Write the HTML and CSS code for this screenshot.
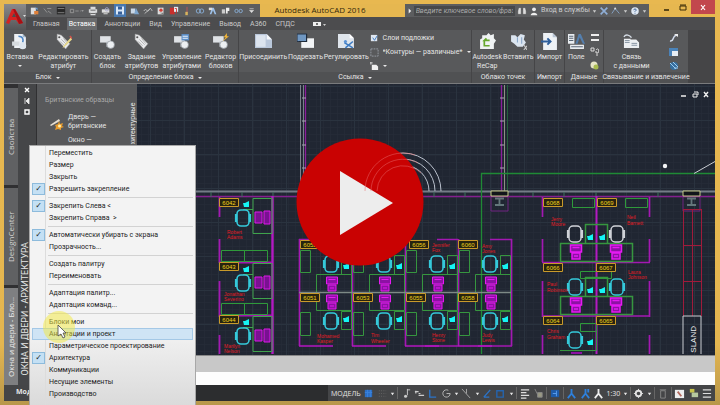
FILE: index.html
```html
<!DOCTYPE html>
<html lang="ru">
<head>
<meta charset="utf-8">
<title>Autodesk AutoCAD 2016</title>
<link rel="stylesheet" href="styles.css">
</head>
<body>
<svg class="defs" aria-hidden="true">
  <defs>
    <g id="page"><path d="M3 1h8l3 3v10H3z" fill="#eef1f5"/><path d="M11 1v3h3z" fill="#9fb6cc"/></g>
    <g id="block"><path d="M1 3h10v6H1z" fill="#dfe2e6"/><path d="M7 8h6v5H7z" fill="#c2c8cf"/><circle cx="11" cy="11" r="3.5" fill="#eceff2" stroke="#8d949c" stroke-width=".6"/></g>
    <g id="tag"><path d="M2 1l4 1 8 8-4 5-8-9z" fill="#e9eaec" stroke="#9b9b9b" stroke-width=".5"/><circle cx="4" cy="4" r="1" fill="#555"/><path d="M6 6l5 5M8 5l4 5M5 8l4 4" stroke="#999" stroke-width=".6"/></g>
    <path id="caret" d="M0 0h4L2 3z" fill="#e8e8e8"/>
  </defs>
</svg>
<div class="app">
  <header class="head">
    <button class="logo" aria-label="Меню приложения">
      <svg viewBox="0 0 22 24"><path d="M8 4h3l8 14-4 1-3-4H7l-2 4-3-1z" fill="#d42323"/><path d="M9 4h2l8 14-4 1z" fill="#a90f14"/><path d="M8 12l2-4 2 4z" fill="#4b4b4b"/><path d="M19 10h3l-1.500 2z" fill="#ddd"/></svg>
    </button>
    <div class="headrows">
      <div class="titlebar">
        <div class="quick">
          <svg viewBox="0 0 12 12"><path d="M1 2h6v8H1z" fill="#ddd"/><path d="M5 6h5v4H5z" fill="#e0813a"/><path d="M6 2h3v3z" fill="#6fa2d8"/></svg>
          <svg viewBox="0 0 12 12"><path d="M1 3l4 5M5 3h5M6 6l4 3" stroke="#999" fill="none"/></svg>
          <svg viewBox="0 0 12 12"><path d="M1 1h10v9H1z" fill="#292929"/><path d="M2 3h8M2 8h8" stroke="#888"/></svg>
          <svg class="wide" viewBox="0 0 18 12"><path d="M1 4h4v4H1zM7 6h4M13 6h1" stroke="#9a9a9a" fill="none"/><path d="M14 5h3l-1 2z" fill="#aaa"/></svg>
          <svg viewBox="0 0 12 12"><path d="M3 1h6v3H3zM1 4h10v4H1zM3 8h6v3H3z" fill="#d9dadc"/><path d="M3 5h6M3 9h6" stroke="#555"/></svg>
          <svg viewBox="0 0 12 12"><path d="M1 4h9v4H1z" fill="#ddd"/><circle cx="7" cy="4" r="2" fill="none" stroke="#aac"/><path d="M3 8h5v2H3z" fill="#bbb"/></svg>
          <svg class="hot" viewBox="0 0 12 12"><path d="M2 2h8v8H2z" fill="#d9e7f8"/><path d="M4 2h4v3H4zM4 7h4v3H4z" fill="#355f9a"/></svg>
          <svg viewBox="0 0 12 12"><path d="M1 3h5v6H1z" fill="#c9d7e6"/><path d="M5 10l2-8 4 8z" fill="#7ea6cf"/></svg>
          <svg viewBox="0 0 12 12"><path d="M1 6c3-5 4 3 6-1s3-1 4 1M2 9l7-6" stroke="#ccc" fill="none"/></svg>
          <svg viewBox="0 0 12 12"><path d="M2 2h7v8H2z" fill="#ddd"/><circle cx="6" cy="5" r="2" fill="#cf4036"/><path d="M4 8h5v2z" fill="#777"/></svg>
          <svg viewBox="0 0 12 12"><path d="M1 2h6v8H1z" fill="#c9302c"/><path d="M6 1h5v6H6z" fill="#e4eaf0"/><path d="M7 3h2v6" stroke="#c9302c" fill="none"/></svg>
          <svg viewBox="0 0 12 12"><path d="M6 1v7" stroke="#c55"/><path d="M4 7h3v4H4z" fill="#d9b45e"/></svg>
          <svg viewBox="0 0 12 12"><circle cx="4" cy="6" r="2.500" fill="none" stroke="#8ab2dd"/><circle cx="8" cy="6" r="2.500" fill="none" stroke="#8ab2dd"/></svg>
          <svg viewBox="0 0 12 12"><path d="M2 10l3-8h2l3 8H8L6 5l-2 5z" fill="#9dc1ea"/><path d="M1 2h4v3H1z" fill="#ddd"/></svg>
          <svg viewBox="0 0 12 12"><path d="M1 4h4v5H1z" fill="#ccc"/><path d="M6 2h4v4H8v3H6z" fill="#eee"/></svg>
          <svg viewBox="0 0 12 12"><circle cx="3" cy="6" r="2" fill="none" stroke="#8ab2dd"/><circle cx="8" cy="6" r="2" fill="none" stroke="#8ab2dd"/></svg>
          <svg viewBox="0 0 12 12"><path d="M3 3h5M3 5h5L5.500 8z" fill="#ddd" stroke="#ddd" stroke-width=".6"/></svg>
        </div>
        <h1 class="title">Autodesk AutoCAD 2016</h1>
        <div class="info">
          <svg class="mini" viewBox="0 0 6 12"><path d="M2 3l3 3-3 3z" fill="#eee"/></svg>
          <input class="search" type="text" aria-label="Поиск" placeholder="Введите ключевое слово/фразу">
          <svg viewBox="0 0 12 12"><path d="M2 2h3v8H1V6zM7 2h3l1 4v4H7zM5 4h2" fill="#ddd" stroke="#444" stroke-width=".5"/></svg>
          <svg viewBox="0 0 12 12"><circle cx="6" cy="4" r="2.300" fill="#eee"/><path d="M2 11c0-4 8-4 8 0z" fill="#eee"/></svg>
          <button class="login">Вход в службы</button>
          <svg class="mini" viewBox="0 0 6 12"><path d="M1 5h4L3 8z" fill="#ccc"/></svg>
          <svg viewBox="0 0 12 12"><path d="M2 2l8 8M10 2l-8 8" stroke="#8faed6" stroke-width="2"/></svg>
          <svg viewBox="0 0 12 12"><path d="M1 9l4-6 5 6" stroke="#89a9cf" fill="none"/><circle cx="5" cy="3" r="1.200" fill="#ddd"/></svg>
          <svg class="mini" viewBox="0 0 6 12"><path d="M1 5h4L3 8z" fill="#ccc"/></svg>
          <svg class="help" viewBox="0 0 12 12"><circle cx="6" cy="6" r="4.500" fill="#dfe8f3"/><path d="M4.500 5c0-2 3-2 3 0L6 6.500V7M6 8.200v1" stroke="#274c83" fill="none"/></svg>
          <svg class="mini" viewBox="0 0 6 12"><path d="M1 5h4L3 8z" fill="#ccc"/></svg>
        </div>
        <div class="winbtns">
          <button aria-label="Свернуть"><svg viewBox="0 0 10 10"><path d="M2 8h5" stroke="#3b2c09" stroke-width="1.600"/></svg></button>
          <button aria-label="Развернуть"><svg viewBox="0 0 10 10"><path d="M2 4h6v4H2z" stroke="#3b2c09" fill="none"/><path d="M2 3h6" stroke="#3b2c09"/></svg></button>
          <button class="close" aria-label="Закрыть"><svg viewBox="0 0 10 10"><path d="M3 3l4 5M7 3L3 8" stroke="#fff" stroke-width="1.200"/></svg></button>
        </div>
      </div>
      <nav class="tabs">
        <a href="#">Главная</a><a href="#" class="on">Вставка</a><a href="#">Аннотации</a><a href="#">Вид</a><a href="#">Управление</a><a href="#">Вывод</a><a href="#">A360</a><a href="#">СПДС</a>
        <svg viewBox="0 0 14 8"><path d="M1 2h8v4H1z" fill="#eee"/><circle cx="5" cy="4" r="1" fill="#444"/><path d="M11 4h3l-1.500 2z" fill="#ccc"/></svg>
      </nav>
    </div>
  </header>

  <section class="ribbon">
    <div class="panel p-block">
      <div class="tools">
        <button><svg viewBox="0 0 16 16"><use href="#page"/><path d="M1 8h7v4H1z" fill="#d6dade"/><path d="M7 3c4 0 5 3 4 6" stroke="#4d86c6" stroke-width="1.500" fill="none"/><circle cx="11" cy="12" r="3.300" fill="#dfe7f0"/></svg><span>Вставка</span><i></i></button>
        <button><svg viewBox="0 0 16 16"><use href="#tag"/><path d="M15 4l-7 8-1 2 2-1 7-7z" fill="#e9d98a"/><path d="M14 3l2 2" stroke="#d2544c" stroke-width="1.500"/></svg><span>Редактировать<br>атрибут</span></button>
      </div>
      <div class="caption">Блок <i></i></div>
    </div>
    <div class="panel p-def">
      <div class="tools">
        <button><svg viewBox="0 0 16 16"><use href="#block"/></svg><span>Создать<br>блок</span></button>
        <button><svg viewBox="0 0 16 16"><use href="#tag"/></svg><span>Задание<br>атрибутов</span></button>
        <button><svg viewBox="0 0 16 16"><use href="#block"/><path d="M8 1h7v6H8z" fill="#5d8fc8"/><path d="M9 3h5M9 5h5" stroke="#e8f1fb"/></svg><span>Управление<br>атрибутами</span></button>
        <button><svg viewBox="0 0 16 16"><use href="#block"/><path d="M14 0l-3 4h2l-3 4 6-5h-2z" fill="#f0b436"/></svg><span>Редактор<br>блоков</span></button>
      </div>
      <div class="caption">Определение блока <i></i></div>
    </div>
    <div class="panel p-link">
      <div class="tools">
        <button><svg viewBox="0 0 16 16"><path d="M0 1h11l5 5v8H0z" fill="#b9c7da"/><path d="M1 2h9v11H1z" fill="#dce4ee"/><path d="M11 1v5h5z" fill="#f6f8fb"/></svg><span>Присоединить</span></button>
        <button><svg viewBox="0 0 16 16"><path d="M4 5h12v9H4z" fill="#f2f4f6"/><path d="M0 1h9v7H0z" fill="#6f97c2" stroke="#26364a"/><path d="M9 1v7H2" stroke="#1f2b3a" fill="none"/></svg><span>Подрезать</span></button>
        <button><svg viewBox="0 0 16 16"><path d="M0 1h11l4 4v9H0z" fill="#dfe5ec"/><path d="M11 1v4h4z" fill="#fff"/><path d="M6 9l8 5M14 8l-7 6" stroke="#3d7bc2" stroke-width="1.500"/><circle cx="7" cy="8" r="1.500" fill="#5b92d4"/></svg><span>Регулировать</span></button>
        <div class="stack">
          <button><svg viewBox="0 0 10 10"><path d="M1 1h7v7H1z" fill="#dfe7f1"/><path d="M3 4l2 3 3-5" stroke="#3a78c2" fill="none"/></svg>Слои подложки</button>
          <label><svg viewBox="0 0 10 10"><path d="M1 1h8v8H1z" fill="none" stroke="#9aa0a8" stroke-dasharray="2 1"/></svg><select><option>*Контуры — различные*</option></select><i></i></label>
          <button><svg viewBox="0 0 10 10"><path d="M2 3h5l2 2v4H2z" fill="#f0f0f0"/><path d="M0 1h3M1 0v3" stroke="#ddd"/></svg><i></i></button>
        </div>
      </div>
      <div class="caption">Ссылка <i></i></div>
    </div>
    <div class="panel p-cloud">
      <div class="tools">
        <button><svg viewBox="0 0 16 16"><path d="M3 2h4l2-2 2 2 3-1v4l2 2-2 3v5H1V6l2-1z" fill="#f0f3f4"/><path d="M10 7H5l2-2M5 7v5h5" stroke="#67a82f" stroke-width="1.600" fill="none"/></svg><span>Autodesk<br>ReCap</span></button>
        <button><svg viewBox="0 0 16 16"><path d="M1 2h4l2 2 3-3 4 1-1 4 2 3-3 4H7L4 10 1 8z" fill="#dbe5f0"/><path d="M7 4v5M11 4v6" stroke="#89a7c9"/><path d="M13 11l3 5M16 12l-3 4" stroke="#ccc"/></svg><span>Вставить</span></button>
      </div>
      <div class="caption">Облако точек</div>
    </div>
    <div class="panel p-import">
      <div class="tools"><button><svg viewBox="0 0 16 16"><path d="M2 0h9l4 4v12H2z" fill="#eef2f6"/><path d="M11 0v4h4z" fill="#b8c5d4"/><path d="M0 8h9M6 5l3 3-3 3" stroke="#2e5f9c" stroke-width="1.800" fill="none"/></svg><span>Импорт</span></button></div>
      <div class="caption">Импорт</div>
    </div>
    <div class="panel p-data">
      <div class="tools">
        <button><svg viewBox="0 0 16 16"><path d="M0 1h6v9H0zM2 11h13v4H2z" fill="#e9edf1"/><path d="M1 3h4M1 5h4M1 7h4M3 13h11" stroke="#596675"/><path d="M7 10l3-9h2l4 9h-2l-3-6-2 6z" fill="#547fae"/></svg><span>Поле</span></button>
        <div class="icons">
          <svg viewBox="0 0 10 10"><path d="M1 2h8M1 7h8" stroke="#eee" stroke-width="2"/></svg>
          <svg viewBox="0 0 10 10"><path d="M1 1h3v3H1zM5 5h2v4M6 3c3-3 3 1 2 3" stroke="#ddd" fill="none"/></svg>
          <svg viewBox="0 0 10 10"><circle cx="4" cy="4" r="3.500" fill="#e7e6c6"/><circle cx="6" cy="6" r="2.500" fill="#a8bb4f"/></svg>
        </div>
      </div>
      <div class="caption">Данные</div>
    </div>
    <div class="panel p-conn">
      <div class="tools">
        <button><svg viewBox="0 0 18 16"><path d="M1 5h7v10H1zM7 6h7l3 3v6H7z" fill="#eceff2"/><path d="M2 7h5M2 9h5M9 10h6M9 12h6" stroke="#82909f"/><path d="M1 3c2-3 6-2 8 1" stroke="#d6dde6" stroke-width="1.500" fill="none"/></svg><span>Связь<br>с данными</span></button>
        <div class="icons">
          <svg viewBox="0 0 10 10"><path d="M1 8c5 1 1-6 8-6" stroke="#d3dced" stroke-width="1.500" fill="none"/><path d="M5 1h4v3z" fill="#eee"/></svg>
          <svg viewBox="0 0 10 10"><path d="M0 1h9v8H0z" fill="#4b83b9"/><path d="M3 4h6v5H3z" fill="#e8eef4"/></svg>
          <svg viewBox="0 0 10 10"><circle cx="5" cy="5" r="4" fill="#376f9f"/><path d="M1 2l6 6M4 1l5 5M5 7h4" stroke="#9ecbef"/></svg>
        </div>
      </div>
      <div class="caption">Связывание и извлечение</div>
    </div>
    <div class="rest"></div>
  </section>

  <main class="work">
    <aside class="sidetabs">
      <button>Свойства</button><button>DesignCenter</button><button class="lit">Окна и двери - Бло...</button>
    </aside>
    <div class="strip">
      <svg viewBox="0 0 8 30"><path d="M2 2l4 4M6 2L2 6" stroke="#fff" stroke-width="1.400"/><path d="M2 12v6M3 15l3-3v6z" fill="#eee" stroke="#eee" stroke-width=".8"/><path d="M2 24h4v4H2z" fill="none" stroke="#fff" stroke-width="1.400"/></svg>
      <span>ОКНА И ДВЕРИ - АРХИТЕКТУРА</span>
    </div>
    <div class="right">
      <div class="canvas">
        <section class="palette">
          <div class="samples">
            <h2>Британские образцы</h2>
            <button><svg viewBox="0 0 14 14"><path d="M0 8l9-6 1 2-9 5z" fill="#e6dfd2"/><path d="M9 4l1 3 3-1-1 3 2 1-3 1v2l-3-1-3 1 1-3-1-2 3-1z" fill="#e79b2d"/><circle cx="9.500" cy="9" r="1.500" fill="#fff2b0"/></svg><span>Дверь —<br>британские</span></button>
            <button><svg viewBox="0 0 14 14"></svg><span>Окно —</span></button>
          </div>
          <span class="ptab">Архитектурные</span>
        </section>
        <svg class="drawing" viewBox="137 84 578 271" preserveAspectRatio="xMinYMin slice" role="img" aria-label="Чертёж">
          <defs>
            <pattern id="minor" width="7" height="7" patternUnits="userSpaceOnUse" x="1" y="1"><path d="M.5 0v7M0 .5h7" stroke="#252c38" stroke-width=".7"/></pattern>
            <pattern id="major" width="34" height="34" patternUnits="userSpaceOnUse" x="14" y="18"><path d="M.5 0v34M0 .5h34" stroke="#2a333f"/></pattern>
            <g id="chair" fill="none"><rect x="-6" y="-8" width="12" height="16" rx="4"/><path d="M-7-4v8M7-4v8" stroke-width="2.200"/></g>
            <path id="phone" d="M0 2h2l4-2v6H1z" fill="#15f4f4"/>
            <g id="pc"><path d="M-5.500-7h11v7h-11zM-4 1h8v6h-8z" fill="#8d11a4" stroke="#e61af2"/><path d="M-3.500-4.500h7M-2 4h4" stroke="#e61af2"/></g>
            <g id="office">
              <path d="M253 .5h19v35h-19zM253 11.500h-10" fill="none" stroke="#3fa34c"/>
              <use href="#chair" x="243" y="20" stroke="#35c9da" stroke-width="1.600"/>
              <use href="#phone" x="243" y="3"/>
              <path d="M255 14h7v11h-7zM264 13h6v13h-6z" fill="#791191" stroke="#dd18e8"/>
            </g>
            <g id="cell">
              <path d="M1.500 250.500h10v22h-10zM1.500 312.500h10v23h-10zM42.500 255.500h10v19h-10zM42.500 311.500h10v18h-10zM17.500 274.500h35v36h-35z" fill="none" stroke="#36963f"/>
              <path d="M0 292.500h53" stroke="#7d8a86" stroke-width="1.300"/>
              <use href="#chair" x="32" y="264" stroke="#35c9da" stroke-width="1.600"/>
              <use href="#chair" x="32" y="321" stroke="#35c9da" stroke-width="1.600"/>
              <use href="#phone" x="44" y="263"/><use href="#phone" x="44" y="316"/>
              <use href="#pc" x="33" y="284"/><use href="#pc" x="33" y="302"/>
              <path d="M0 346h34" stroke="#b416c2" stroke-width="1.600"/>
            </g>
            <g id="pair">
              <path d="M560.500 18.500h72v18h-72zM585.500-.500h22v19h-22z" fill="none" stroke="#36963f"/>
              <use href="#chair" x="575" y="9"/><use href="#chair" x="617" y="9"/>
              <g stroke="none"><use href="#phone" x="587" y="9"/><use href="#phone" x="599" y="9"/></g>
              <use href="#pc" x="576" y="27"/><use href="#pc" x="616" y="27"/>
            </g>
            <g id="column"><path d="M0 191h17v5H0z" fill="#11151a" stroke="#c5c98a"/><path d="M4 198.500h9M4 205h9M8.500 198v7" stroke="#64777b" stroke-width="1.800"/><path d="M0 197v14h17v-14" fill="none" stroke="#6e2380"/></g>
            <path id="plate" d="M.5.500h19v8H.5z" fill="#27230f" stroke="#c99a2b"/>
          </defs>
          <rect x="137" y="84" width="2000" height="1200" fill="#202632"/>
          <rect x="137" y="84" width="2000" height="1200" fill="url(#minor)"/>
          <rect x="137" y="84" width="2000" height="1200" fill="url(#major)"/>
          <path d="M300.500 85v106M303.500 85v106" stroke="#7b808c"/>
          <path d="M305.500 85v106M501.500 85v106" stroke="#8c1d9c" stroke-width="1.300"/>
          <path d="M302 98h4M302 121h4M302 145h4M302 168h4M500 98h5M500 121h5M500 145h5M500 168h5" stroke="#a4a4b0"/>
          <path d="M504.500 85v106" stroke="#8f9086"/><path d="M507.500 85v106" stroke="#245f3b"/>
          <path d="M196 191.500h519" stroke="#747c87" stroke-width="2"/><path d="M196 196.500h519" stroke="#85208f" stroke-width="1.500"/>
          <path d="M211 192v5M242 192v5M273 192v5M434 192v5M465 192v5M533 192v5M564 192v5M596 192v5M658 192v5" stroke="#3f6f5c"/>
          <g fill="none" stroke="#b9c0cc"><path d="M365 191a38 38 0 0 1 76 0M371 191a32 32 0 0 1 64 0M377 191a26 26 0 0 1 52 0"/></g>
          <path d="M481.500 354V173.500H715" fill="none" stroke="#1f8a35" stroke-width="1.300"/>
          <path d="M694 173.500l21-12" stroke="#c8ccd2"/><circle cx="665" cy="166" r="2.200" fill="#f3f4f6"/>
          <g stroke="#f0f0f0" fill="none" stroke-width="1.400"><path d="M681 96h5M704 92l4 5M708 92l-4 5"/><path d="M693 94h4v3h-4zM694 92h4v3" stroke-width="1"/></g>
          <use href="#column" x="491"/><use href="#column" x="683"/>
          <path d="M683.500 209v107M692.500 209v107M701.500 209v107M683 209.500h18M683 245.500h18M683 281.500h18" stroke="#a01b3b"/>
          <path d="M683 354v-38h18v38" fill="none" stroke="#c9ccd1"/>
          <text class="island" transform="translate(696 326) rotate(-90)" text-anchor="end">SLAND</text>

          <path d="M272.500 196v158" stroke="#b31ac2" stroke-width="2.400"/>
          <path d="M219.500 197v20M219.500 239v24M219.500 281v36M219.500 335v19M219 262.500h53M219 315.500h53" stroke="#a318b2" stroke-width="1.800"/>
          <path d="M221.500 250.500h23v11h-23zM244.500 250.500h23v11h-23zM221.500 303.500h23v11h-23zM244.500 303.500h23v11h-23z" fill="none" stroke="#2f9a3b"/>
          <use href="#office" y="198"/><use href="#office" y="263"/><use href="#office" y="316"/>

          <path d="M299.500 239v107M352.500 239v107M405.500 239v107M458.500 239v107M511.500 239v107M299 239.500h34M437 239.500h21M490 239.500h22M478 346h34M425 346h33" stroke="#a318b2" stroke-width="1.700"/>
          <use href="#cell" x="299"/><use href="#cell" x="352"/><use href="#cell" x="405"/><use href="#cell" x="458"/>

          <path d="M596.500 196v158" stroke="#b31ac2" stroke-width="2"/>
          <path d="M542.500 197v20M542.500 239v23M542.500 281v36M542.500 335v19M649.500 197v20M649.500 239v23M649.500 281v36M649.500 335v19M542 262.500h108M542 316h108" stroke="#a318b2" stroke-width="1.700"/>
          <path d="M572.500 198.500h22v9h-22zM625.500 198.500h22v9h-22zM580.500 271.500h31v7h-31zM580.500 323.500h16v8h-16z" fill="none" stroke="#2f9a3b"/>
          <use href="#pair" y="225" stroke="#cfd2d8" stroke-width="1.500"/><use href="#pair" y="278" stroke="#35c9da" stroke-width="1.500"/>
          <path d="M585.500 331.500h11v19M560 350.500h36" fill="none" stroke="#36963f"/>
          <use href="#chair" x="575" y="340" stroke="#35c9da" stroke-width="1.500"/><use href="#phone" x="587" y="339"/><path d="M571 352h11v2h-11z" fill="#8d11a4"/>

          <use href="#plate" x="219" y="198"/><use href="#plate" x="219" y="262"/><use href="#plate" x="219" y="315"/>
          <use href="#plate" x="300" y="240"/><use href="#plate" x="353" y="240"/><use href="#plate" x="409" y="240"/><use href="#plate" x="458" y="240"/>
          <use href="#plate" x="300" y="293"/><use href="#plate" x="353" y="293"/><use href="#plate" x="406" y="293"/><use href="#plate" x="458" y="293"/>
          <use href="#plate" x="543" y="198"/><use href="#plate" x="597" y="198"/><use href="#plate" x="543" y="263"/><use href="#plate" x="596" y="263"/><use href="#plate" x="543" y="316"/><use href="#plate" x="596" y="316"/>
          <g class="num">
            <text x="229" y="205">6042</text><text x="229" y="269">6043</text><text x="229" y="322">6044</text>
            <text x="310" y="247">6052</text><text x="363" y="247">6054</text><text x="419" y="247">6056</text><text x="468" y="247">6060</text>
            <text x="310" y="300">6051</text><text x="363" y="300">6053</text><text x="416" y="300">6055</text><text x="468" y="300">6058</text>
            <text x="553" y="205">6068</text><text x="607" y="205">6069</text><text x="553" y="270">6066</text><text x="606" y="270">6067</text><text x="553" y="323">6064</text><text x="606" y="323">6065</text>
          </g>
          <g class="names">
            <text x="227" y="234">Robert</text><text x="227" y="239">Adams</text>
            <text x="224" y="296">Jonathan</text><text x="224" y="301">Severino</text>
            <text x="224" y="348">Marilyn</text><text x="224" y="353">Nelson</text>
            <text x="317" y="338">Mohamed</text><text x="317" y="343">Kasper</text>
            <text x="371" y="337">Tim</text><text x="371" y="343">Wheeler</text>
            <text x="432" y="337">Henry</text><text x="432" y="342">Stone</text>
            <text x="432" y="247">Jennifer</text><text x="432" y="252">Fox</text>
            <text x="482" y="248">Amy</text><text x="482" y="253">Jones</text>
            <text x="482" y="337">Judy</text><text x="482" y="342">Lewis</text>
            <text x="551" y="221">Jerry</text><text x="551" y="226">Moore</text>
            <text x="627" y="219">Neil</text><text x="627" y="225">Barnett</text>
            <text x="547" y="286">Paul</text><text x="547" y="292">Robinson</text>
            <text x="628" y="274">Laura</text><text x="628" y="279">Johnson</text>
            <text x="547" y="333">Chris</text><text x="547" y="339">Graham</text>
          </g>
        </svg>
      </div>
      <div class="history"></div>
      <input class="command" type="text" aria-label="Командная строка">
    </div>

    <div class="menu" role="menu">
      <button>Переместить</button>
      <button>Размер</button>
      <button>Закрыть</button>
      <button class="checked">Разрешить закрепление</button>
      <hr>
      <button class="checked">Закрепить Слева &lt;</button>
      <button>Закрепить Справа &nbsp;&gt;</button>
      <hr>
      <button class="checked">Автоматически убирать с экрана</button>
      <button>Прозрачность...</button>
      <hr>
      <button>Создать палитру</button>
      <button>Переименовать</button>
      <hr>
      <button>Адаптация палитр...</button>
      <button>Адаптация команд...</button>
      <hr>
      <button>Блоки мои</button>
      <button class="hover">Аннотации и проект</button>
      <button>Параметрическое проектирование</button>
      <button class="checked">Архитектура</button>
      <button>Коммуникации</button>
      <button>Несущие элементы</button>
      <button>Производство</button>
      <svg class="cursor" viewBox="0 0 34 34"><circle cx="17" cy="17" r="16" fill="#f3ea3c" opacity=".5"/><path d="M16 15v11l3-2 2 4 2-1-2-4h3z" fill="#fff" stroke="#444" stroke-width=".8"/></svg>
    </div>
  </main>

  <footer class="status">
    <span class="model">Модель</span>
    <div class="modes">
      <button>МОДЕЛЬ</button>
      <svg viewBox="0 0 12 12"><path d="M2 2h8v8H2z" fill="#2c6fc4"/><path d="M5 2v8M8 2v8M2 5h8" stroke="#3b82dc"/></svg>
      <svg viewBox="0 0 12 12"><path d="M2 3h8M2 6h8M2 9h8" stroke="#666" stroke-dasharray="1 1.500"/></svg>
      <svg class="mini" viewBox="0 0 6 12"><use href="#caret" x="1" y="5"/></svg>
      <hr>
      <svg viewBox="0 0 12 12"><path d="M7 1v7M7 2h3" stroke="#ccc" fill="none"/><circle cx="5" cy="9" r="1.700" fill="#ccc"/></svg>
      <svg viewBox="0 0 12 12"><path d="M2 3v3M1 4h4M5 8h6M5 6h2" stroke="#ccc" stroke-width="1.300"/></svg>
      <svg viewBox="0 0 12 12"><path d="M3 2v8h7" stroke="#2b74c9" stroke-width="1.500" fill="none"/></svg>
      <svg viewBox="0 0 12 12"><path d="M10 6a4 4 0 1 1-2-3.500M6 6h4" stroke="#bbb" fill="none"/></svg>
      <svg class="mini" viewBox="0 0 6 12"><use href="#caret" x="1" y="5"/></svg>
      <svg viewBox="0 0 12 12"><path d="M1 1l9 10M6 1v5" stroke="#aaa"/></svg>
      <svg class="mini" viewBox="0 0 6 12"><use href="#caret" x="1" y="5"/></svg>
      <svg viewBox="0 0 12 12"><path d="M2 10l7-8M2 10h6" stroke="#2b74c9" stroke-width="1.500"/></svg>
      <svg viewBox="0 0 12 12"><path d="M2 3h7v7H2z" fill="none" stroke="#2565af" stroke-width="1.500"/></svg>
      <svg class="mini" viewBox="0 0 6 12"><use href="#caret" x="1" y="5"/></svg>
      <hr>
      <svg viewBox="0 0 12 12"><path d="M1 2h9M1 5h6M1 8h9M1 11h6" stroke="#ddd" stroke-width="1.300"/></svg>
      <svg viewBox="0 0 12 12"><path d="M2 1l3 6M5 5h5v5H5z" fill="#9a9a84" stroke="#888"/></svg>
      <hr>
      <svg viewBox="0 0 12 12"><path d="M1 2h9v8H1z" fill="#1e5ba8"/><path d="M3 6h4M7 3v6" stroke="#5ca0f0"/></svg>
      <hr>
      <svg viewBox="0 0 12 12"><path d="M6 1v5l-4 5M6 6l4 5" stroke="#2e80dc" stroke-width="2" fill="none"/></svg>
      <svg viewBox="0 0 12 12"><path d="M6 1v5l-4 5M6 6l4 5M9 1v4" stroke="#2e80dc" stroke-width="2" fill="none"/></svg>
      <svg viewBox="0 0 12 12"><path d="M6 1v5l-4 5M6 6l4 5" stroke="#eee" stroke-width="2" fill="none"/></svg>
      <button>1:30</button>
      <svg class="mini" viewBox="0 0 6 12"><use href="#caret" x="1" y="5"/></svg>
      <hr>
      <svg viewBox="0 0 12 12"><circle cx="6" cy="6" r="3" fill="none" stroke="#e2e2e2" stroke-width="2"/><path d="M6 1v2M6 9v2M1 6h2M9 6h2" stroke="#e2e2e2"/></svg>
      <svg class="mini" viewBox="0 0 6 12"><use href="#caret" x="1" y="5"/></svg>
      <hr>
      <svg viewBox="0 0 12 12"><path d="M4 3h5v8H4zM3 2h7" stroke="#888" fill="none"/></svg>
      <hr>
      <svg viewBox="0 0 12 12"><path d="M1 2h10v9H1z" fill="#eee"/><path d="M4 4l4 5" stroke="#b36a5e" stroke-width="2"/></svg>
      <svg viewBox="0 0 12 12"><path d="M2 1h5v4H2z" fill="#c8c44c"/><path d="M4 5h7v5H4z" fill="#b6c9a0"/></svg>
      <svg viewBox="0 0 12 12"><path d="M2 2h9M2 6h9M2 10h9" stroke="#ddd" stroke-width="1.300"/></svg>
    </div>
  </footer>
</div>
<button class="play" aria-label="Воспроизвести видео"><svg viewBox="0 0 128 128"><circle cx="64" cy="64" r="63.500" fill="#c90202"/><path d="M44 33l53 32-53 32z" fill="#ededed"/><g fill="none" stroke="#e8686a" stroke-width="1" opacity=".5"><path d="M69 53a38 38 0 0 1 50-36M75 53a32 32 0 0 1 47-28M81 53a26 26 0 0 1 44-18"/></g></svg></button>
</body>
</html>
```

FILE: styles.css
```css
*, *::before { box-sizing: border-box; }
body {
  margin: 0;
  overflow: hidden;
  background: linear-gradient(#e8b850 0, #e4b650 85%, #b8974a 100%);
  font-family: Roboto, "Noto Sans", sans-serif;
  font-size: 7px;
  line-height: 9px;
  color: #e6e6e6;
}
button, input, select {
  margin: 0;
  padding: 0;
  border: 0;
  background: none;
  font: inherit;
  color: inherit;
  white-space: nowrap;
}
svg { display: block; flex: none; }
.defs { position: absolute; width: 0; height: 0; }
.app {
  display: flex;
  flex-direction: column;
  height: 100vh;
  padding: 4px 5px 4px 4px;
}

/* header */
.head { display: flex; height: 26px; background: #4c4c4e; }
.logo { width: 22px; background: linear-gradient(#8a8a8c, #555557); }
.headrows { flex: 1; min-width: 0; }
.titlebar {
  display: flex;
  height: 13px;
  background: #e6b750;
}
.quick {
  display: flex;
  flex: 236;
  align-items: center;
  justify-content: space-between;
  padding: 0 3px 0 4px;
  background: #5c5d5f;
}
.quick svg { width: 10px; height: 10px; }
.quick .wide { width: 16px; }
.quick .hot { background: #4878b0; height: 13px; width: 12px; }
.title {
  flex: 135;
  margin: 0;
  padding-left: 14px;
  font: 400 8px/11px "Open Sans", sans-serif;
  color: #33270b;
  white-space: nowrap;
}
.info {
  display: flex;
  flex: 250;
  align-items: center;
  justify-content: space-between;
  padding: 0 2px;
  background: #5c5d5f;
}
.info svg { width: 10px; height: 10px; }
.info .mini { width: 5px; }
.search {
  flex: 0 1 101px;
  min-width: 0;
  height: 10px;
  padding: 0 2px;
  background: #47484a;
}
.search::placeholder { color: #aaa; font-style: italic; opacity: 1; }
.login { color: #d0d0d0; }
.winbtns { display: flex; flex: 68; justify-content: flex-end; margin-top: -4px; height: 14px; }
.winbtns button { width: 16px; padding: 2px 3px; }
.winbtns svg { width: 10px; height: 10px; }
.winbtns .close { width: 24px; padding: 1px 7px; height: 14px; background: #c2474d; }
.tabs { display: flex; align-items: center; height: 13px; padding-left: 5px; background: #4c4c4e; }
.tabs a { margin-right: 5px; padding: 0 2px; line-height: 12px; color: #c9c9c9; text-decoration: none; }
.tabs a.on { background: #6a6b6d; color: #fff; }
.tabs svg { width: 14px; height: 8px; margin-left: 10px; }

/* ribbon */
.ribbon { display: flex; gap: 1px; height: 54px; background: #454547; border-bottom: 1px solid #7a7b7d; }
.panel { display: flex; flex-direction: column; min-width: 0; background: #58595b; }
.p-block { flex: 87; }
.p-def { flex: 146; }
.p-link { flex: 232; }
.p-cloud { flex: 62; }
.p-import { flex: 29; }
.p-data { flex: 38; }
.p-conn { flex: 84; }
.rest { flex: 26; }
.tools { display: flex; flex: 1; justify-content: space-around; padding-top: 3px; }
.tools > button { display: flex; flex-direction: column; align-items: center; }
.tools > button > svg { width: 17px; height: 17px; margin-bottom: 3px; }
.caption {
  display: flex;
  align-items: center;
  justify-content: center;
  gap: 4px;
  height: 11px;
  background: #505153;
  white-space: nowrap;
}
i { width: 0; border: 2px solid transparent; border-top: 2px solid #e8e8e8; border-bottom: 0; }
.tools > button > i { margin-top: 3px; }
.stack { display: flex; flex-direction: column; gap: 4px; }
.stack > * { display: flex; align-items: center; gap: 4px; height: 10px; }
.stack svg { width: 9px; height: 9px; }
select { appearance: none; }
.icons { display: flex; flex-direction: column; gap: 4px; }
.icons svg { width: 10px; height: 10px; }

/* work area */
.work { position: relative; display: flex; flex: 1; min-height: 0; background: #39393b; }
.sidetabs { display: flex; flex-direction: column; gap: 3px; width: 14px; padding-top: 4px; background: #303032; }
.sidetabs button {
  flex: 1;
  writing-mode: vertical-rl;
  transform: rotate(180deg);
  text-align: center;
  font: 8px/14px "Open Sans", sans-serif;
  background: #606163;
  color: #d0d0d0;
}
.sidetabs .lit { background: #7e7f81; color: #ececec; }
.strip { display: flex; flex-direction: column; justify-content: space-between; align-items: center; width: 18px; padding: 2px 0 10px; background: #454648; }
.strip svg { width: 8px; height: 30px; }
.strip span { writing-mode: vertical-rl; transform: rotate(180deg); white-space: nowrap; font-size: 9px; line-height: 10px; margin-right: 4px; }
.right { display: flex; flex: 1; flex-direction: column; min-width: 0; }
.canvas { display: flex; flex: 1; min-height: 0; overflow: hidden; }
.palette { display: flex; justify-content: space-between; width: 101px; padding: 4px 0 0 4px; background: #58595b; border-left: 1px solid #303032; }
.samples { display: flex; flex-direction: column; gap: 5px; padding: 8px 0 0 4px; }
.samples h2 { margin: 0 0 3px; font-size: 7px; line-height: 9px; font-weight: 400; color: #a9a9a9; white-space: nowrap; }
.samples button { display: flex; gap: 4px; padding-left: 5px; text-align: left; }
.samples button svg { width: 14px; height: 14px; margin-top: 4px; }
.ptab { writing-mode: vertical-rl; transform: rotate(180deg); height: 66px; margin-top: 15px; width: 8px; text-align: right; line-height: 8px; }
.drawing { flex: 1; min-width: 0; height: 100%; }
.history { height: 17px; background: #c8c8c8; border-top: 1px solid #888; }
.command { height: 13px; background: #fdfdfd; color: #222; }
.island { font: 8px "Liberation Sans", sans-serif; fill: #e8eaec; }
.num { font: 6px "Liberation Sans", sans-serif; fill: #f0d21c; text-anchor: middle; }
.names { font: 5px "Liberation Sans", sans-serif; fill: #e01c24; }

/* context menu */
.menu {
  position: absolute;
  left: 25px;
  top: 61px;
  display: flex;
  flex-direction: column;
  width: 167px;
  padding: 1px 2px 6px;
  background: linear-gradient(90deg, transparent 15px, #dcdcdc 15px, #dcdcdc 16px, transparent 16px), linear-gradient(#f3f3f3 70%, #dadada);
  border: 1px solid #a8a8a8;
  z-index: 2;
}
.menu button { display: flex; align-items: center; height: 12px; padding-left: 17px; color: #1c1c1c; text-align: left; }
.menu hr { width: 145px; height: 1px; margin: 2px 0 2px auto; border: 0; background: #d2d2d2; }
.menu .checked { padding-left: 0; }
.menu .checked::before {
  content: "✓";
  width: 13px;
  height: 12px;
  margin-right: 4px;
  background: #c4e0f4;
  border: 1px solid #8dbbdc;
  font: 700 8px/10px "DejaVu Sans", sans-serif;
  text-align: center;
}
.menu .hover { background: #cfe4f5; outline: 1px solid #a4c8e6; outline-offset: -1px; }
.cursor { position: absolute; left: 12px; top: 164px; width: 34px; height: 34px; }

/* status bar */
.status { display: flex; justify-content: space-between; height: 16px; background: #2c2d2f; font-family: "Open Sans", sans-serif; }
.model { width: 60px; padding-left: 12px; font-weight: 700; line-height: 14px; background: #444547; }
.modes { display: flex; flex: 0 1 387px; align-items: center; justify-content: space-between; padding: 0 3px; background: #444547; }
.modes svg { width: 11px; height: 11px; }
.modes .mini { width: 5px; }
.modes hr { width: 1px; height: 12px; margin: 0; border: 0; background: #666; }

/* video play button */
.play { position: absolute; left: 50%; top: 50%; width: 128px; height: 128px; margin: -65px 0 0 -64px; z-index: 3; }
.play svg { width: 100%; height: 100%; }
```
